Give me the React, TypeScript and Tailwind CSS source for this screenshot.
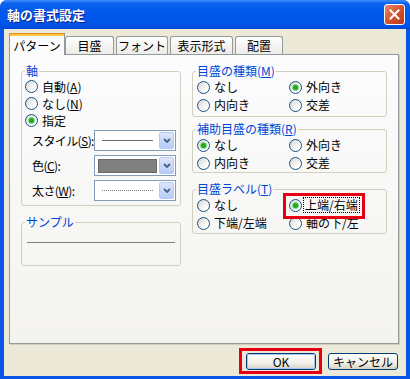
import React from 'react';

const font = "font-['Noto_Sans_CJK_JP','MS_UI_Gothic',sans-serif]";

const Acc = ({ label, k, colon }: { label: string; k: string; colon?: boolean }) => (
  <span>
    {label}(<span className="underline underline-offset-[1px]">{k}</span>){colon ? ':' : ''}
  </span>
);

const Radio = ({ checked }: { checked?: boolean }) => (
  <span className="flex h-[13px] w-[13px] shrink-0 items-center justify-center rounded-full border border-[#1C5180] bg-[linear-gradient(135deg,#D6D6CE,#FFFFFF_75%)]">
    {checked && <span className="h-[5px] w-[5px] rounded-full bg-[#21A821] shadow-[0_0_0_1px_#8FD98F]" />}
  </span>
);

const RadioItem = ({
  checked,
  children,
  focus,
  rowClass = 'h-[18px]',
}: {
  checked?: boolean;
  children: React.ReactNode;
  focus?: boolean;
  rowClass?: string;
}) => (
  <div className={`flex items-center whitespace-nowrap ${rowClass} ${focus ? 'gap-[1px]' : 'gap-[4px]'}`}>
    <Radio checked={checked} />
    {focus ? (
      <span className="border border-dotted border-black px-[1px] leading-[14px]">{children}</span>
    ) : (
      <span className="leading-[14px]">{children}</span>
    )}
  </div>
);

const Group = ({
  title,
  className = '',
  children,
}: {
  title: React.ReactNode;
  className?: string;
  children?: React.ReactNode;
}) => (
  <fieldset className={`m-0 rounded-[3px] border border-[#D0D0BF] p-0 ${className}`}>
    <legend className="ml-[3px] whitespace-nowrap px-[1px] text-[12px] leading-[14px] text-[#0046D5]">{title}</legend>
    {children}
  </fieldset>
);

const Chevron = () => (
  <svg width="8" height="5" viewBox="0 0 8 5">
    <path d="M1 1 L4 4 L7 1" fill="none" stroke="#4D6185" strokeWidth="1.8" />
  </svg>
);

const Combo = ({ children }: { children: React.ReactNode }) => (
  <div className="flex h-[21px] w-[82px] shrink-0 items-stretch border border-[#7F9DB9] bg-white p-[1px]">
    <div className="flex flex-1 items-center px-[2px]">{children}</div>
    <div className="flex w-[15px] items-center justify-center rounded-[2px] border border-[#B9C9EF] bg-[linear-gradient(180deg,#DCE6FC,#B6CBF7)]">
      <Chevron />
    </div>
  </div>
);

const ComboRow = ({ label, children }: { label: React.ReactNode; children: React.ReactNode }) => (
  <div className="flex h-[21px] items-center">
    <div className="w-[72px] shrink-0 whitespace-nowrap pl-[10px] leading-[14px] tracking-[-0.6px]">{label}</div>
    <Combo>{children}</Combo>
  </div>
);

const Tab = ({ label, w }: { label: string; w: string }) => (
  <div
    className={`flex h-[18px] ${w} items-center justify-center rounded-t-[3px] border border-b-0 border-[#919B9C] bg-[linear-gradient(180deg,#FFFFFF,#ECEBE6)] leading-[14px]`}
  >
    {label}
  </div>
);

const XpButton = ({ label, def }: { label: string; def?: boolean }) => (
  <div className="h-[17px] w-[70px] rounded-[3px] border border-[#003C74] bg-[linear-gradient(180deg,#FFFFFF,#F0F0EA_60%,#D6D0C5)]">
    <div
      className={`flex h-full items-center justify-center rounded-[2px] leading-[13px] ${
        def ? 'shadow-[inset_0_0_0_1px_#A9C4F3]' : ''
      }`}
    >
      {label}
    </div>
  </div>
);

export default function App() {
  return (
    <div
      className={`relative flex h-[379px] w-[410px] flex-col overflow-hidden rounded-t-[7px] bg-[#0B55E6] text-[12px] text-black ${font}`}
    >
      {/* title bar */}
      <div className="flex h-[29px] items-center justify-between bg-[linear-gradient(180deg,#3D8EF9_0%,#0A62EC_12%,#0058EE_45%,#0055E8_85%,#0047D6_100%)] pl-[7px] pr-[5px]">
        <span className="text-[13px] font-bold leading-[16px] text-white [text-shadow:1px_1px_#0A1E8C]">
          軸の書式設定
        </span>
        <div className="flex h-[21px] w-[21px] items-center justify-center rounded-[3px] border border-white bg-[linear-gradient(135deg,#E88A6A,#D5532F_50%,#B9371A)]">
          <svg width="11" height="11" viewBox="0 0 11 11">
            <path d="M1.5 1.5 L9.5 9.5 M9.5 1.5 L1.5 9.5" stroke="white" strokeWidth="2" strokeLinecap="square" />
          </svg>
        </div>
      </div>

      {/* body */}
      <div className="mx-[4px] mb-[3px] flex flex-1 flex-col bg-[#ECE9D8] pt-[4px]">
        {/* tabs */}
        <div className="ml-[5px] flex h-[21px] items-end">
          <div className="relative z-10 -mb-[1px] flex h-[22px] w-[56px] flex-col border border-b-0 border-[#919B9C] border-t-[#E68B2C] bg-[#FCFCFE]">
            <div className="h-[2px] bg-[#FFC83C]" />
            <div className="flex flex-1 items-center justify-center leading-[14px]">パターン</div>
          </div>
          <Tab label="目盛" w="w-[49px]" />
          <div className="w-[2px]" />
          <Tab label="フォント" w="w-[52px]" />
          <div className="w-[2px]" />
          <Tab label="表示形式" w="w-[63px]" />
          <div className="w-[2px]" />
          <Tab label="配置" w="w-[48px]" />
        </div>

        {/* panel */}
        <div className="ml-[5px] flex h-[290px] w-[390px] gap-[11px] border border-[#919B9C] bg-[linear-gradient(180deg,#FCFCFE,#F4F3EE)] pl-[11px] pt-[9px] shadow-[1px_1px_0_#D0CEBF]">
          {/* left column */}
          <div className="flex w-[160px] flex-col">
            <Group title="軸" className="h-[142px]">
              <div className="pl-[3px]">
                <RadioItem rowClass="h-[17px]">
                  <Acc label="自動" k="A" />
                </RadioItem>
                <RadioItem rowClass="h-[17px]">
                  <Acc label="なし" k="N" />
                </RadioItem>
                <RadioItem rowClass="h-[17px]" checked>
                  指定
                </RadioItem>
              </div>
              <div className="mt-[1px] flex flex-col gap-[4px]">
                <ComboRow label={<Acc label="スタイル" k="S" colon />}>
                  <div className="mx-[4px] h-px flex-1 bg-[#6E6E6E]" />
                </ComboRow>
                <ComboRow label={<Acc label="色" k="C" colon />}>
                  <div className="h-[14px] flex-1 border border-[#6A6A6A] bg-[#808080]" />
                </ComboRow>
                <ComboRow label={<Acc label="太さ" k="W" colon />}>
                  <div className="mx-[4px] h-0 flex-1 border-t border-dotted border-[#7A7A7A]" />
                </ComboRow>
              </div>
            </Group>
            <Group title="サンプル" className="mt-[9px] h-[51px]">
              <div className="mx-[5px] mt-[13px] h-px bg-[#7F7F7F]" />
            </Group>
          </div>

          {/* right column */}
          <div className="flex w-[195px] flex-col">
            <Group title={<Acc label="目盛の種類" k="M" />} className="h-[53px]">
              <div className="grid grid-cols-[92px_1fr] pl-[4px]">
                <RadioItem>なし</RadioItem>
                <RadioItem checked>外向き</RadioItem>
                <RadioItem>内向き</RadioItem>
                <RadioItem>交差</RadioItem>
              </div>
            </Group>
            <Group title={<Acc label="補助目盛の種類" k="R" />} className="mt-[5px] h-[51px]">
              <div className="grid grid-cols-[92px_1fr] pl-[4px]">
                <RadioItem checked>なし</RadioItem>
                <RadioItem>外向き</RadioItem>
                <RadioItem>内向き</RadioItem>
                <RadioItem>交差</RadioItem>
              </div>
            </Group>
            <Group title={<Acc label="目盛ラベル" k="T" />} className="mt-[9px] h-[52px]">
              <div className="grid grid-cols-[92px_1fr] pl-[4px]">
                <RadioItem>なし</RadioItem>
                <RadioItem checked focus>
                  上端/右端
                </RadioItem>
                <RadioItem>下端/左端</RadioItem>
                <RadioItem>軸の下/左</RadioItem>
              </div>
            </Group>
          </div>
        </div>

        {/* buttons */}
        <div className="ml-[5px] mt-[9px] flex w-[390px] justify-end gap-[12px] pr-[1px]">
          <XpButton label="OK" def />
          <XpButton label="キャンセル" />
        </div>
      </div>

      {/* annotation boxes */}
      <div className="absolute left-[283px] top-[193px] h-[26px] w-[82px] border-[3px] border-[#E60012]" />
      <div className="absolute left-[239px] top-[348px] h-[26px] w-[83px] border-[3px] border-[#E60012]" />
    </div>
  );
}
